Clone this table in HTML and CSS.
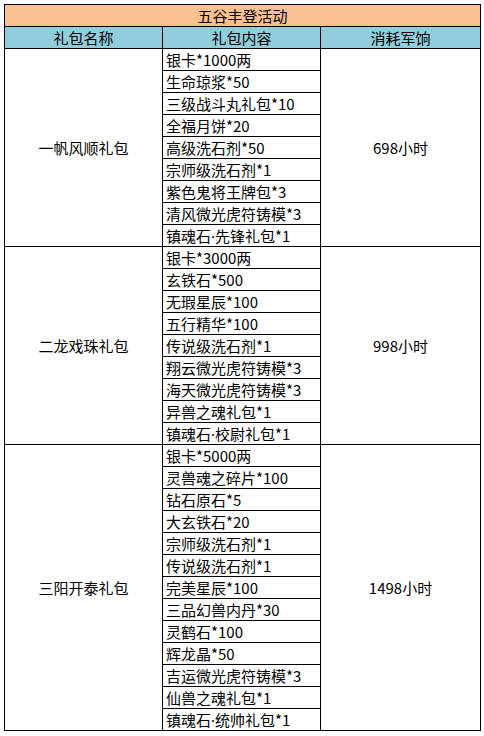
FILE: index.html
```html
<!DOCTYPE html>
<html lang="zh">
<head>
<meta charset="utf-8">
<link rel="stylesheet" href="styles.css">
</head>
<body>
<table class="gift">
  <colgroup><col class="c1"><col class="c2"><col class="c3"></colgroup>
  <tr><td class="title" colspan="3">五谷丰登活动</td></tr>
  <tr class="head"><td>礼包名称</td><td>礼包内容</td><td>消耗军饷</td></tr>
  <tr><td class="name" rowspan="9">一帆风顺礼包</td><td class="item">银卡*1000两</td><td class="cost" rowspan="9">698小时</td></tr>
  <tr><td class="item">生命琼浆*50</td></tr>
  <tr><td class="item">三级战斗丸礼包*10</td></tr>
  <tr><td class="item">全福月饼*20</td></tr>
  <tr><td class="item">高级洗石剂*50</td></tr>
  <tr><td class="item">宗师级洗石剂*1</td></tr>
  <tr><td class="item">紫色鬼将王牌包*3</td></tr>
  <tr><td class="item">清风微光虎符铸模*3</td></tr>
  <tr><td class="item">镇魂石<span class="dot">·</span>先锋礼包*1</td></tr>
  <tr><td class="name" rowspan="9">二龙戏珠礼包</td><td class="item">银卡*3000两</td><td class="cost" rowspan="9">998小时</td></tr>
  <tr><td class="item">玄铁石*500</td></tr>
  <tr><td class="item">无瑕星辰*100</td></tr>
  <tr><td class="item">五行精华*100</td></tr>
  <tr><td class="item">传说级洗石剂*1</td></tr>
  <tr><td class="item">翔云微光虎符铸模*3</td></tr>
  <tr><td class="item">海天微光虎符铸模*3</td></tr>
  <tr><td class="item">异兽之魂礼包*1</td></tr>
  <tr><td class="item">镇魂石<span class="dot">·</span>校尉礼包*1</td></tr>
  <tr><td class="name" rowspan="13">三阳开泰礼包</td><td class="item">银卡*5000两</td><td class="cost" rowspan="13">1498小时</td></tr>
  <tr><td class="item">灵兽魂之碎片*100</td></tr>
  <tr><td class="item">钻石原石*5</td></tr>
  <tr><td class="item">大玄铁石*20</td></tr>
  <tr><td class="item">宗师级洗石剂*1</td></tr>
  <tr><td class="item">传说级洗石剂*1</td></tr>
  <tr><td class="item">完美星辰*100</td></tr>
  <tr><td class="item">三品幻兽内丹*30</td></tr>
  <tr><td class="item">灵鹤石*100</td></tr>
  <tr><td class="item">辉龙晶*50</td></tr>
  <tr><td class="item">吉运微光虎符铸模*3</td></tr>
  <tr><td class="item">仙兽之魂礼包*1</td></tr>
  <tr><td class="item">镇魂石<span class="dot">·</span>统帅礼包*1</td></tr>
</table>
</body>
</html>
```
FILE: styles.css
```css
html, body {
  margin: 0;
  padding: 0;
  background: #ffffff;
}
body {
  padding: 4px 0 0 4px;
  font-family: "Noto Sans CJK SC", "Noto Sans", sans-serif;
  font-size: 15px;
  color: #000000;
}
.gift {
  border-collapse: collapse;
  table-layout: fixed;
  width: 476px;
}
.c1 { width: 158px; }
.c2 { width: 158px; }
.c3 { width: 160px; }
.gift td {
  border: 1px solid #000000;
  height: 21px;
  padding: 0;
  line-height: 21px;
  white-space: nowrap;
  overflow: hidden;
}
.title {
  background: #fac090;
  text-align: center;
}
.head td {
  background: #92cddc;
  text-align: center;
}
.item {
  padding-left: 3px !important;
  text-align: left;
}
.dot {
  font-family: "Noto Sans", "DejaVu Sans", sans-serif;
  line-height: 0;
}
.name, .cost {
  text-align: center;
  vertical-align: middle;
}
```
